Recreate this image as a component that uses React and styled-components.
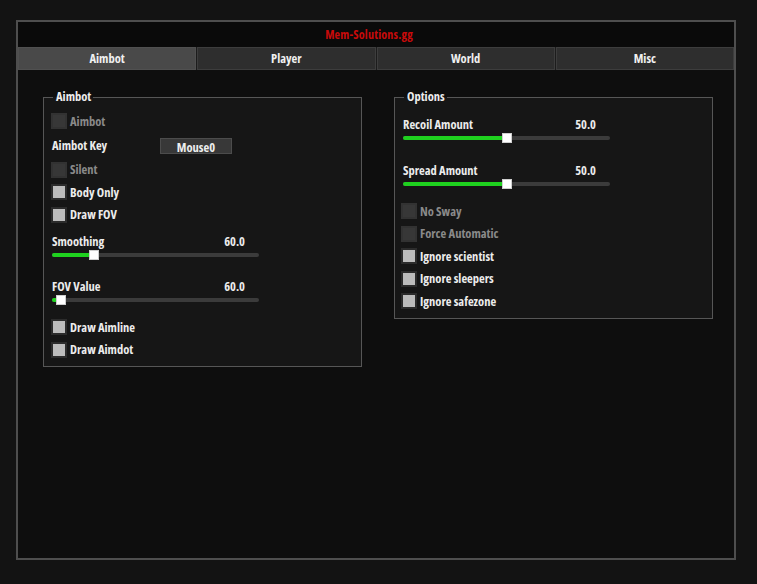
import React from 'react';
import styled, { createGlobalStyle } from 'styled-components';

const GlobalStyle = createGlobalStyle`
  html, body {
    margin: 0;
    padding: 0;
    background: #131313;
  }
  body {
    font-family: "Open Sans", "Roboto", sans-serif;
    font-stretch: 83%;
    font-weight: bold;
    font-size: 12.5px;
    color: #e6e6e6;
  }
`;

// main cheat window
const Window = styled.div`
  box-sizing: border-box;
  width: 720px;
  height: 540px;
  margin: 20px 0 0 16px;
  border: 2px solid #4e4e4e;
  background: #0e0e0e;
  display: flex;
  flex-direction: column;
`;

const TitleBar = styled.div`
  height: 25px;
  flex: none;
  background: #0a0a0a;
  display: flex;
  align-items: center;
  justify-content: center;
  padding-right: 14px;
  color: #c80a0a;
  font-size: 12px;
  letter-spacing: 0.2px;
`;

const Tabs = styled.div`
  height: 23px;
  flex: none;
  display: flex;
  gap: 1px;
  background: #1c1c1c;
`;

const Tab = styled.div`
  flex: 1;
  box-sizing: border-box;
  display: flex;
  align-items: center;
  justify-content: center;
  background: ${p => (p.$active ? '#494949' : '#2e2e2e')};
  border: 1px solid ${p => (p.$active ? '#505050' : '#3d3d3d')};
  color: #f0f0f0;
`;

const Body = styled.div`
  flex: 1;
  display: flex;
  align-items: flex-start;
  gap: 32px;
  padding: 20px 0 0 25px;
`;

const Group = styled.fieldset`
  box-sizing: border-box;
  width: 319px;
  margin: 0;
  padding: 6px 0 ${p => p.$bottom}px 0;
  border: 1px solid #565656;
  background: #161616;
  min-width: 0;
`;

const GroupTitle = styled.legend`
  margin-left: 9px;
  padding: 0 2px 0 3px;
  line-height: 14px;
  color: #ededed;
`;

const Row = styled.div`
  height: ${p => p.$h || 22.5}px;
  display: flex;
  align-items: center;
  padding-left: ${p => p.$pad || 7}px;
`;

const Box = styled.span`
  box-sizing: border-box;
  width: 16px;
  height: 16px;
  flex: none;
  margin-right: 3px;
  background: ${p => (p.$disabled ? '#373737' : '#bcbcbc')};
  border: 2px solid ${p => (p.$disabled ? '#323232' : '#2c2c2c')};
`;

const Label = styled.span`
  color: ${p => (p.$disabled ? '#8a8a8a' : '#ececec')};
  width: ${p => (p.$w ? p.$w + 'px' : 'auto')};
`;

const KeyButton = styled.button`
  box-sizing: border-box;
  width: 72px;
  height: 16px;
  padding: 0;
  margin-left: 32px;
  background: #383838;
  border: 1px solid #4c4c4c;
  color: #eeeeee;
  font: inherit;
`;

const SliderBlock = styled.div`
  height: 45px;
  padding: ${p => p.$top || 8}px 0 0 ${p => p.$pad || 8}px;
  box-sizing: border-box;
`;

const SliderHead = styled.div`
  width: 193px;
  height: 14px;
  display: flex;
  align-items: center;
  justify-content: space-between;
`;

const Track = styled.div`
  position: relative;
  width: 207px;
  height: 14px;
  display: flex;
  align-items: center;
  &::before {
    content: '';
    width: 100%;
    height: 4px;
    background: #3b3b3b;
    border-radius: 2px;
  }
`;

const Fill = styled.div`
  position: absolute;
  left: 0;
  top: 5px;
  height: 4px;
  border-radius: 2px;
  background: #1fd11f;
`;

const Thumb = styled.div`
  position: absolute;
  top: 2px;
  width: 10px;
  height: 10px;
  margin-left: -5px;
  box-sizing: border-box;
  background: #ffffff;
  border: 1px solid #cfcfcf;
`;

function Check({ label, disabled, pad }) {
  return (
    <Row $pad={pad}>
      <Box $disabled={disabled} />
      <Label $disabled={disabled}>{label}</Label>
    </Row>
  );
}

function Slider({ label, value, percent, pad, top }) {
  return (
    <SliderBlock $pad={pad} $top={top}>
      <SliderHead>
        <Label>{label}</Label>
        <Label>{value}</Label>
      </SliderHead>
      <Track>
        <Fill style={{ width: percent + '%' }} />
        <Thumb style={{ left: percent + '%' }} />
      </Track>
    </SliderBlock>
  );
}

const tabs = ['Aimbot', 'Player', 'World', 'Misc'];

export default function App() {
  return (
    <>
      <GlobalStyle />
      <Window>
        <TitleBar>Mem-Solutions.gg</TitleBar>
        <Tabs>
          {tabs.map((t, i) => (
            <Tab key={t} $active={i === 0}>{t}</Tab>
          ))}
        </Tabs>
        <Body>
          <Group $bottom={5}>
            <GroupTitle>Aimbot</GroupTitle>
            <Check label="Aimbot" disabled />
            <Row $h={26} $pad={8}>
              <Label $w={76}>Aimbot Key</Label>
              <KeyButton>Mouse0</KeyButton>
            </Row>
            <Check label="Silent" disabled />
            <Check label="Body Only" />
            <Check label="Draw FOV" />
            <Slider label="Smoothing" value="60.0" percent={20.5} />
            <Slider label="FOV Value" value="60.0" percent={4.4} />
            <Check label="Draw Aimline" />
            <Check label="Draw Aimdot" />
          </Group>
          <Group $bottom={5}>
            <GroupTitle>Options</GroupTitle>
            <Slider label="Recoil Amount" value="50.0" percent={50} pad={8} top={7} />
            <Slider label="Spread Amount" value="50.0" percent={50} pad={8} />
            <Check label="No Sway" disabled pad={6} />
            <Check label="Force Automatic" disabled pad={6} />
            <Check label="Ignore scientist" pad={6} />
            <Check label="Ignore sleepers" pad={6} />
            <Check label="Ignore safezone" pad={6} />
          </Group>
        </Body>
      </Window>
    </>
  );
}
